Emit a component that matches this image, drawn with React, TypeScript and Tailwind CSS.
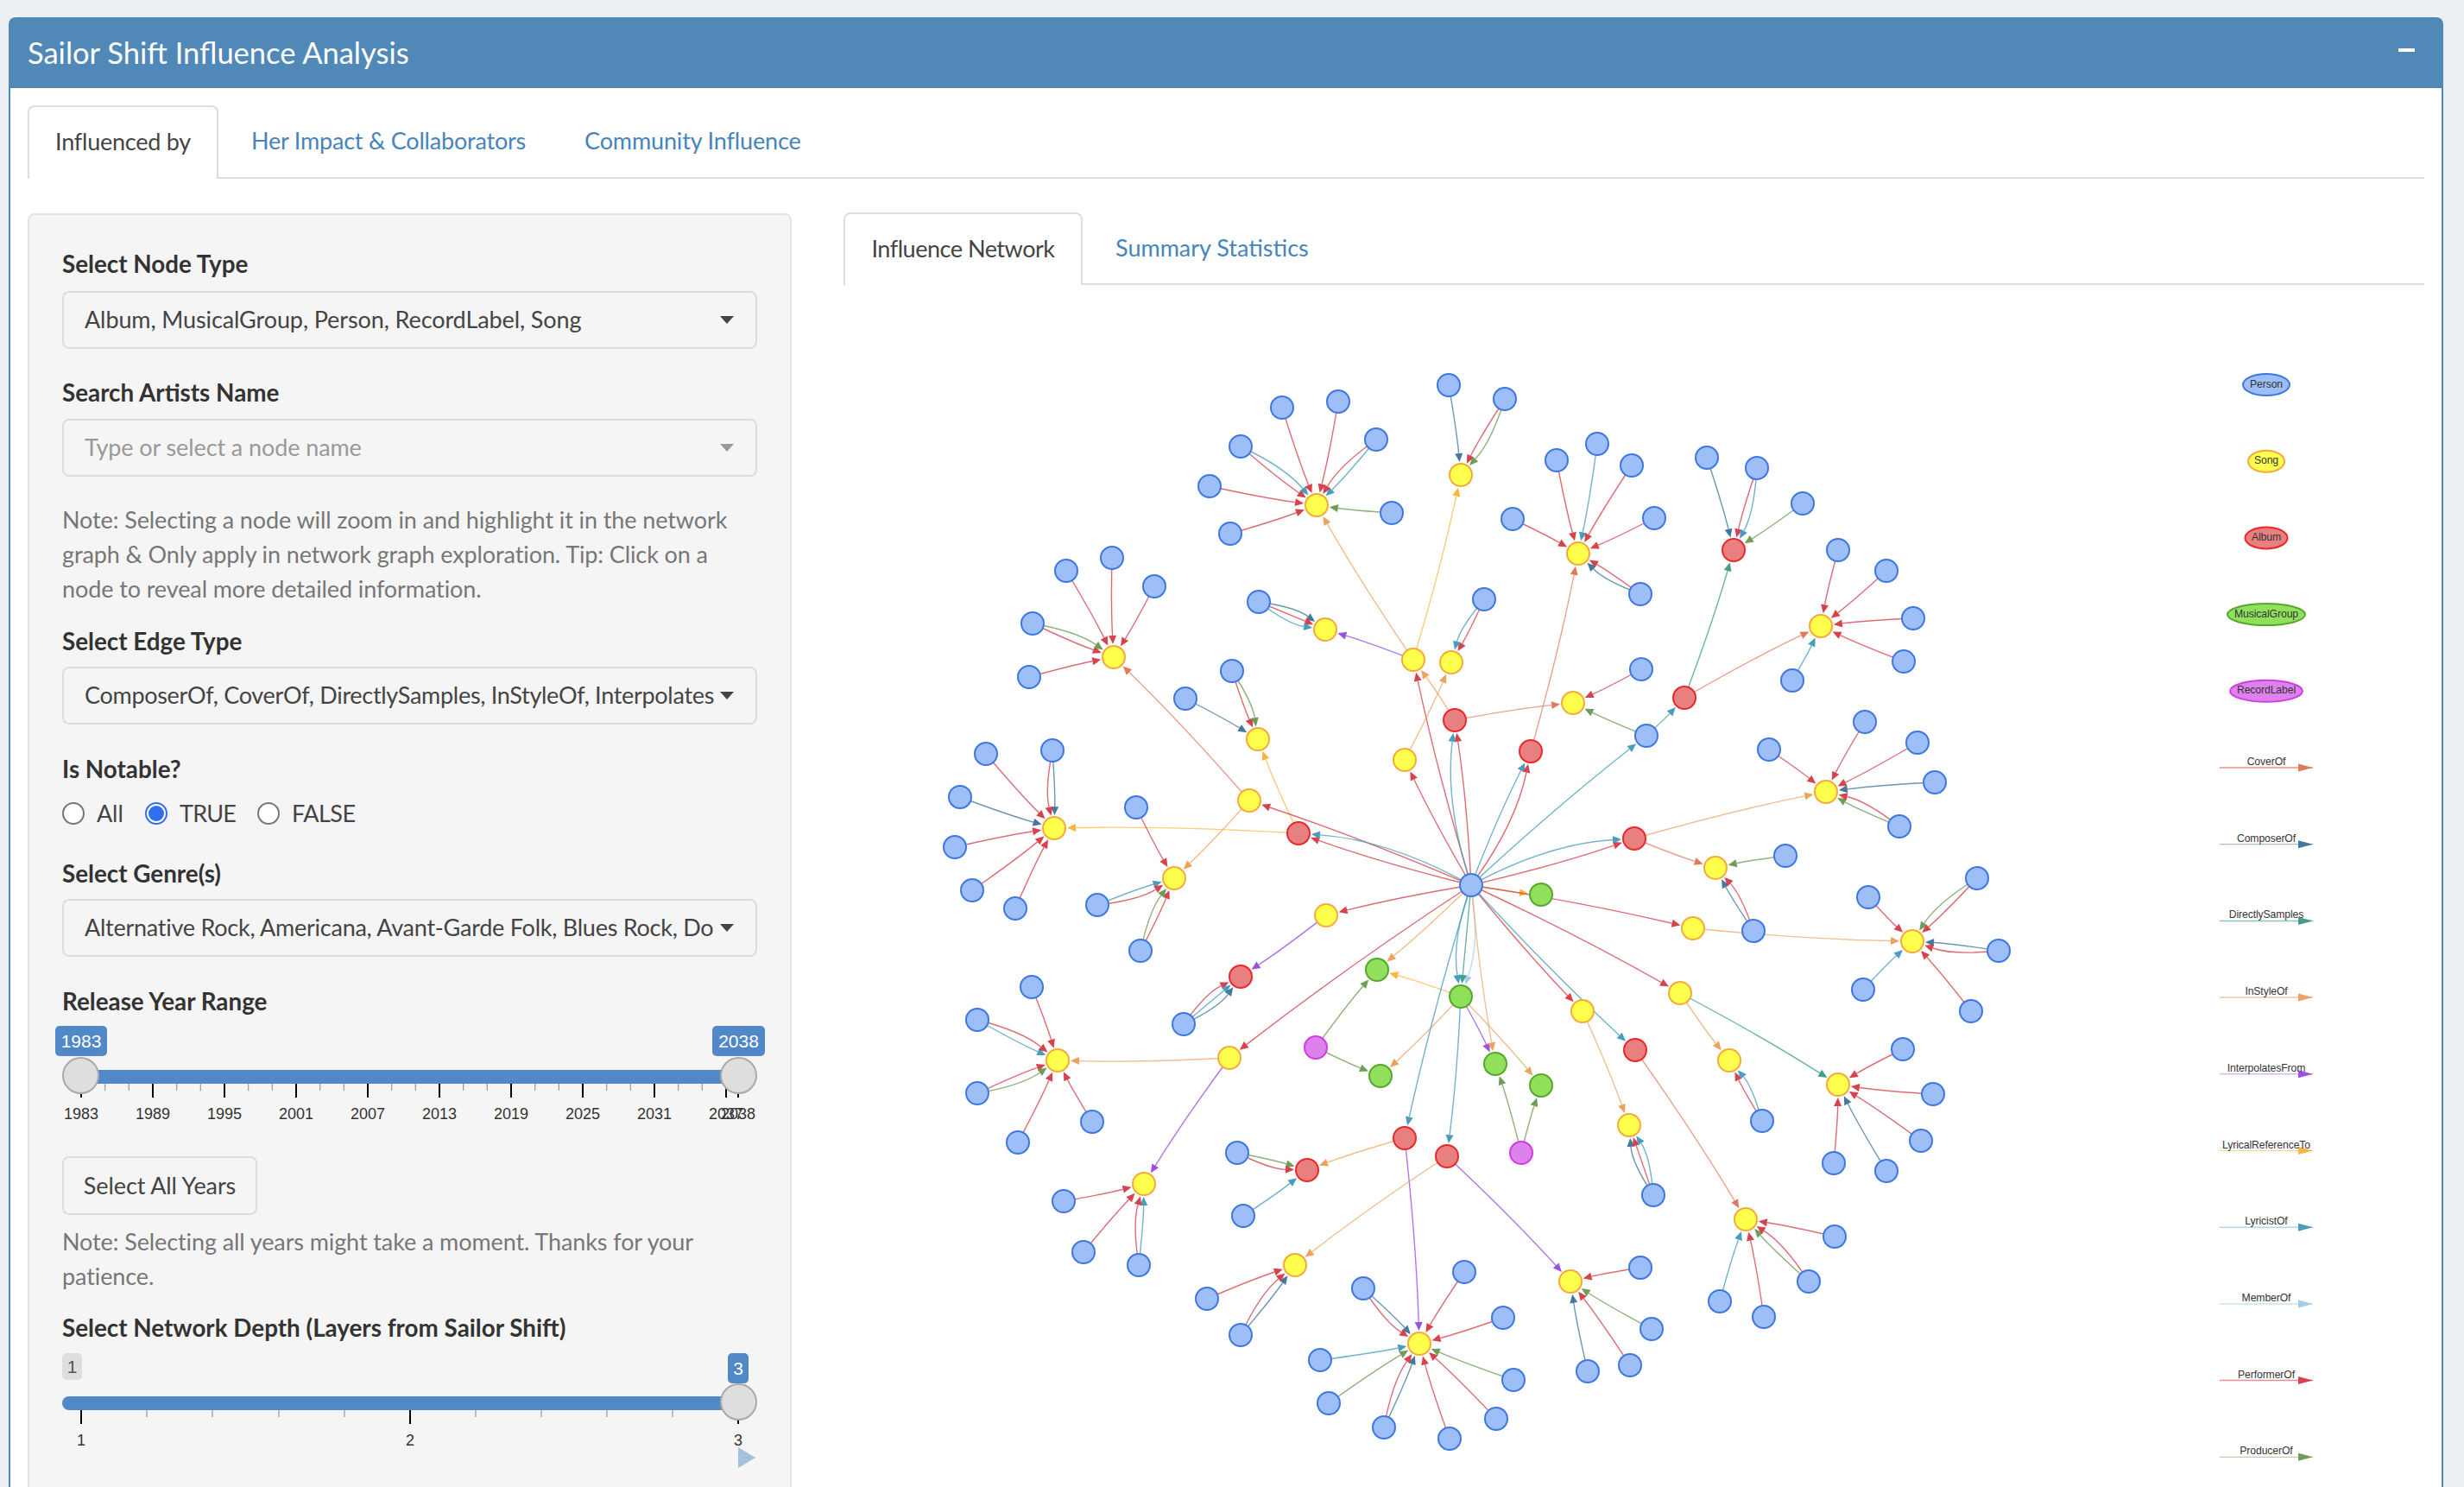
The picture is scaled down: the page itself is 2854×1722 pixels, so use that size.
const NODE_STYLE: Record<string, [string, string]> = {
  b: ["#9dbef6", "#3f77e0"],
  y: ["#ffff4d", "#f6a93b"],
  r: ["#e98080", "#e8282a"],
  g: ["#90e05c", "#57a62f"],
  p: ["#dc82ec", "#d43ae6"],
};

const EDGE_COLOR: Record<string, string> = {
  V: "#df7a5e",
  C: "#44789c",
  D: "#459d90",
  S: "#eba25f",
  I: "#9a50e0",
  Y: "#fbb53c",
  L: "#4a9dbd",
  M: "#a2cde9",
  P: "#d5434d",
  R: "#6f9c57",
};

// hubs and inner nodes: [id, x, y, kind]
const N: [string, number, number, string][] = [
  ["c", 1704, 1024, "b"],
  ["A", 1525, 584, "y"], ["T", 1692, 549, "y"], ["D", 1828, 640, "y"], ["E", 2008, 636, "r"],
  ["F", 2109, 724, "y"], ["B", 1290, 760, "y"], ["Y1", 1535, 728, "y"], ["Y2", 1637, 763, "y"],
  ["Y3", 1681, 766, "y"], ["Rd", 1685, 833, "r"], ["Yc", 1627, 879, "y"], ["Y4", 1457, 855, "y"],
  ["Y5", 1447, 926, "y"], ["R1", 1504, 964, "r"], ["H1", 1221, 958, "y"], ["Y6", 1360, 1016, "y"],
  ["Rn", 1773, 869, "r"], ["Bq", 1907, 851, "b"], ["Re", 1951, 807, "r"], ["Yq", 1822, 813, "y"],
  ["Rf", 1893, 970, "r"], ["G", 2115, 916, "y"], ["Yg", 1987, 1004, "y"], ["Bg", 2031, 1077, "b"],
  ["Gn", 1785, 1035, "g"], ["Yh", 1961, 1074, "y"], ["H", 2215, 1089, "y"], ["Yi", 1946, 1149, "y"],
  ["Yj", 2003, 1227, "y"], ["I", 2129, 1255, "y"], ["Yk", 1833, 1170, "y"], ["Yl", 1887, 1302, "y"],
  ["Rj", 1894, 1215, "r"], ["J", 2022, 1411, "y"], ["Ym", 1536, 1059, "y"], ["Rm", 1437, 1130, "r"],
  ["Yn", 1424, 1224, "y"], ["L", 1225, 1227, "y"], ["Yo", 1325, 1370, "y"], ["G1", 1595, 1122, "g"],
  ["G2", 1692, 1153, "g"], ["G3", 1599, 1245, "g"], ["G4", 1732, 1231, "g"], ["G5", 1785, 1256, "g"],
  ["P1", 1524, 1212, "p"], ["P2", 1762, 1334, "p"], ["R3", 1627, 1317, "r"], ["R4", 1676, 1338, "r"],
  ["R5", 1514, 1354, "r"], ["Yp", 1500, 1464, "y"], ["M", 1644, 1555, "y"], ["K", 1819, 1483, "y"],
];

// leaves: [x, y, target, edge colours]
const LEAF: [number, number, string, string][] = [
  [1485, 471, "A", "P"], [1550, 464, "A", "P"], [1437, 516, "A", "PL"], [1594, 508, "A", "LP"],
  [1401, 562, "A", "P"], [1612, 593, "A", "R"], [1425, 617, "A", "P"],
  [1678, 445, "T", "C"], [1743, 461, "T", "PR"],
  [1752, 600, "D", "P"], [1803, 532, "D", "P"], [1850, 513, "D", "L"], [1890, 538, "D", "P"],
  [1916, 599, "D", "P"], [1900, 687, "D", "PC"],
  [1977, 529, "E", "C"], [2035, 541, "E", "PL"], [2088, 582, "E", "R"],
  [2129, 636, "F", "P"], [2185, 660, "F", "P"], [2216, 715, "F", "P"], [2205, 765, "F", "P"], [2076, 787, "F", "L"],
  [1235, 660, "B", "P"], [1288, 645, "B", "P"], [1337, 678, "B", "P"], [1196, 721, "B", "PR"], [1192, 783, "B", "P"],
  [1458, 696, "Y1", "CPL"], [1719, 693, "Y3", "PL"],
  [1427, 776, "Y4", "PR"], [1373, 808, "Y4", "C"],
  [1142, 872, "H1", "P"], [1219, 868, "H1", "CP"], [1112, 922, "H1", "C"], [1106, 980, "H1", "P"],
  [1126, 1030, "H1", "P"], [1176, 1051, "H1", "P"],
  [1316, 934, "Y6", "P"], [1271, 1047, "Y6", "LP"], [1321, 1100, "Y6", "PR"],
  [1901, 774, "Yq", "P"], [2068, 990, "Yg", "R"],
  [2049, 867, "G", "P"], [2160, 835, "G", "P"], [2221, 859, "G", "P"], [2241, 905, "G", "C"], [2200, 956, "G", "RP"],
  [2164, 1038, "H", "P"], [2290, 1016, "H", "PR"], [2315, 1100, "H", "CP"], [2158, 1145, "H", "L"], [2283, 1170, "H", "P"],
  [2041, 1297, "Yj", "PL"],
  [2204, 1214, "I", "P"], [2239, 1266, "I", "P"], [2225, 1320, "I", "P"], [2185, 1355, "I", "C"], [2124, 1346, "I", "P"],
  [1915, 1383, "Yl", "CPL"],
  [2125, 1431, "J", "P"], [2095, 1483, "J", "RP"], [2043, 1524, "J", "P"], [1992, 1506, "J", "L"],
  [1371, 1185, "Rm", "PLC"],
  [1195, 1142, "L", "P"], [1132, 1180, "L", "LP"], [1132, 1265, "L", "PR"], [1179, 1322, "L", "P"], [1265, 1298, "L", "P"],
  [1232, 1390, "Yo", "P"], [1255, 1449, "Yo", "P"], [1319, 1464, "Yo", "LP"],
  [1433, 1334, "R5", "RP"], [1440, 1407, "R5", "L"],
  [1398, 1503, "Yp", "P"], [1437, 1545, "Yp", "CP"],
  [1579, 1491, "M", "CP"], [1696, 1472, "M", "P"], [1741, 1525, "M", "P"], [1529, 1574, "M", "L"],
  [1539, 1624, "M", "R"], [1603, 1652, "M", "CP"], [1679, 1665, "M", "P"], [1733, 1642, "M", "P"], [1753, 1597, "M", "R"],
  [1900, 1467, "K", "P"], [1913, 1538, "K", "R"], [1888, 1580, "K", "P"], [1839, 1587, "K", "C"],
];

// inner edges: from, to, colours
const INNER: [string, string, string][] = [
  ["Y2", "Y1", "I"], ["Y2", "A", "S"], ["Y2", "T", "Y"], ["c", "Y2", "P"], ["Yc", "Y3", "S"], ["c", "Yc", "P"],
  ["Rd", "Y2", "S"], ["Rd", "Yq", "V"], ["c", "Rd", "PL"], ["R1", "Y4", "Y"], ["Y5", "B", "V"], ["Y5", "Y6", "S"],
  ["c", "Y5", "P"], ["c", "R1", "PL"], ["R1", "H1", "Y"], ["c", "Rn", "LP"], ["Rn", "D", "V"], ["c", "Bq", "L"],
  ["Bq", "Re", "L"], ["Bq", "Yq", "R"], ["Re", "E", "D"], ["Re", "F", "V"], ["c", "Rf", "PL"], ["Rf", "G", "S"],
  ["Rf", "Yg", "V"], ["Bg", "Yg", "CP"], ["c", "Gn", "Y"], ["c", "Yh", "P"], ["Yh", "H", "S"], ["c", "Yi", "P"],
  ["Yi", "Yj", "S"], ["Yi", "I", "D"], ["c", "Yk", "P"], ["Yk", "Yl", "S"], ["c", "Rj", "L"], ["Rj", "J", "V"],
  ["c", "Ym", "P"], ["Ym", "Rm", "I"], ["c", "Yn", "P"], ["Yn", "L", "S"], ["Yn", "Yo", "I"], ["c", "G1", "S"],
  ["G2", "G1", "Y"], ["P1", "G1", "R"], ["P1", "G3", "R"], ["G2", "G3", "S"], ["c", "G2", "MDL"], ["G2", "G4", "I"],
  ["c", "G4", "S"], ["G2", "G5", "S"], ["P2", "G4", "R"], ["P2", "G5", "R"], ["c", "R3", "L"], ["G2", "R4", "L"],
  ["R3", "R5", "S"], ["R3", "M", "I"], ["R4", "Yp", "S"], ["R4", "K", "I"],
];

const POS: Record<string, [number, number]> = {};
N.forEach(([id, x, y]) => {
  POS[id] = [x, y];
});

function curveOffsets(n: number, seed: number) {
  const s = seed % 2 === 0 ? 1 : -1;
  if (n === 1) return [s * 0.02];
  if (n === 2) return [s * 0.025, -s * 0.11];
  return [-0.13, 0, 0.13];
}

const PALE = "VSYM";

function Edge({ x1, y1, x2, y2, code, off }: { x1: number; y1: number; x2: number; y2: number; code: string; off: number }) {
  const dx = x2 - x1;
  const dy = y2 - y1;
  const cx = (x1 + x2) / 2 - dy * off;
  const cy = (y1 + y2) / 2 + dx * off;
  const ex = x2 - cx;
  const ey = y2 - cy;
  const el = Math.hypot(ex, ey);
  const ux = ex / el;
  const uy = ey / el;
  const tx = x2 - ux * 15;
  const ty = y2 - uy * 15;
  const bx = tx - ux * 10;
  const by = ty - uy * 10;
  const color = EDGE_COLOR[code];
  return (
    <g>
      <path d={`M${x1} ${y1}Q${cx} ${cy} ${bx} ${by}`} fill="none" stroke={color} strokeWidth={1.4} strokeOpacity={PALE.includes(code) ? 0.7 : 0.78} />
      <polygon points={`${tx},${ty} ${bx - uy * 4.5},${by + ux * 4.5} ${bx + uy * 4.5},${by - ux * 4.5}`} fill={color} />
    </g>
  );
}

function Network() {
  const edges: { x1: number; y1: number; x2: number; y2: number; code: string; off: number }[] = [];
  INNER.forEach(([a, b, codes], i) => {
    const [x1, y1] = POS[a];
    const [x2, y2] = POS[b];
    const offs = curveOffsets(codes.length, i);
    codes.split("").forEach((code, j) => edges.push({ x1, y1, x2, y2, code, off: offs[j] }));
  });
  LEAF.forEach(([x1, y1, t, codes], i) => {
    const [x2, y2] = POS[t];
    const offs = curveOffsets(codes.length, i);
    codes.split("").forEach((code, j) => edges.push({ x1, y1, x2, y2, code, off: offs[j] }));
  });
  return (
    <>
      {edges.map((e, i) => (
        <Edge key={i} {...e} />
      ))}
      {LEAF.map(([x, y], i) => (
        <circle key={i} cx={x} cy={y} r={13} fill={NODE_STYLE.b[0]} stroke={NODE_STYLE.b[1]} strokeWidth={2} />
      ))}
      {N.map(([id, x, y, k]) => (
        <circle key={id} cx={x} cy={y} r={13} fill={NODE_STYLE[k][0]} stroke={NODE_STYLE[k][1]} strokeWidth={2} />
      ))}
    </>
  );
}

const LEGEND_NODES: [string, string, number][] = [
  ["Person", "b", 27],
  ["Song", "y", 21],
  ["Album", "r", 24.5],
  ["MusicalGroup", "g", 45],
  ["RecordLabel", "p", 42],
];

const LEGEND_EDGES: [string, string, number][] = [
  ["CoverOf", "V", 2],
  ["ComposerOf", "C", 1],
  ["DirectlySamples", "D", 1.5],
  ["InStyleOf", "S", 1.5],
  ["InterpolatesFrom", "I", 1],
  ["LyricalReferenceTo", "Y", 1],
  ["LyricistOf", "L", 1],
  ["MemberOf", "M", 1.5],
  ["PerformerOf", "P", 1.5],
  ["ProducerOf", "R", 1],
];

function Legend() {
  return (
    <g fontFamily="'Liberation Sans', Arial, sans-serif" fontSize={12.2} fill="#343434" textAnchor="middle">
      {LEGEND_NODES.map(([label, k, rx], i) => {
        const y = 444.5 + 88.7 * i;
        return (
          <g key={label}>
            <ellipse cx={2625} cy={y} rx={rx} ry={12.5} fill={NODE_STYLE[k][0]} stroke={NODE_STYLE[k][1]} strokeWidth={2} />
            <text x={2625} y={y + 3}>{label}</text>
          </g>
        );
      })}
      {LEGEND_EDGES.map(([label, code, w], i) => {
        const y = 888 + 88.7 * i;
        return (
          <g key={label}>
            <line x1={2571} y1={y} x2={2679} y2={y} stroke={EDGE_COLOR[code]} strokeWidth={w} strokeOpacity={0.6} />
            <polygon points={`2679,${y} 2662,${y - 4.5} 2662,${y + 4.5}`} fill={EDGE_COLOR[code]} />
            <text x={2625} y={y - 3}>{label}</text>
          </g>
        );
      })}
    </g>
  );
}

function Caret({ muted }: { muted?: boolean }) {
  return <span className={`w-0 h-0 shrink-0 border-x-[8px] border-x-transparent border-t-[9px] ${muted ? "border-t-[#999]" : "border-t-[#444]"}`} />;
}

function Label({ children }: { children: React.ReactNode }) {
  return <div className="font-bold text-[#333] text-[27.8px] tracking-normal leading-[40px]">{children}</div>;
}

function Select({ text, muted, className }: { text: string; muted?: boolean; className?: string }) {
  return (
    <div className={`flex items-center justify-between h-[67px] pl-[24px] pr-[25px] border-2 border-[#ddd] rounded-lg ${muted ? "text-[#999]" : "text-[#444]"} ${className ?? ""}`}>
      <span className="whitespace-nowrap">{text}</span>
      <Caret muted={muted} />
    </div>
  );
}

function Radio({ label, checked, labelClass }: { label: string; checked?: boolean; labelClass: string }) {
  return (
    <div className="flex items-center gap-[14px]">
      <span className={`w-[26px] h-[26px] rounded-full flex items-center justify-center bg-white border-2 ${checked ? "border-[#2f6fed]" : "border-[#777]"}`}>
        {checked && <span className="w-[18px] h-[18px] rounded-full bg-[#2f6fed]" />}
      </span>
      <span className={`text-[#444] whitespace-nowrap ${labelClass}`}>{label}</span>
    </div>
  );
}

function Handle() {
  return <span className="w-[43px] h-[43px] rounded-full bg-[#dedede] border-2 border-[#aaa] shrink-0" />;
}

function Badge({ children, grey, className }: { children: React.ReactNode; grey?: boolean; className?: string }) {
  return (
    <span className={`absolute rounded-[5px] text-[21px] leading-none tracking-normal flex items-center justify-center font-['Liberation_Sans'] ${grey ? "bg-[#dedede] text-[#555]" : "bg-[#5088c8] text-white"} ${className ?? ""}`}>
      {children}
    </span>
  );
}

function YearSlider() {
  const years = ["1983", "1989", "1995", "2001", "2007", "2013", "2019", "2025", "2031", "2037"];
  return (
    <div className="relative h-[122px] font-['Liberation_Sans'] tracking-normal">
      <Badge className="left-[-8px] top-0 w-[60px] h-[35px]">1983</Badge>
      <Badge className="right-[-9px] top-0 w-[61px] h-[35px]">2038</Badge>
      <svg className="absolute left-0 top-0" width={806} height={122} viewBox="72 1188 806 122">
        {Array.from({ length: 28 }, (_, i) => 94 + (83 * i) / 3).filter((x) => x < 840).map((x) => (
          <line key={x} x1={x} x2={x} y1={1255} y2={1263} stroke="#999" strokeWidth={1.2} />
        ))}
        {years.map((y, i) => (
          <g key={y}>
            <line x1={94 + 83 * i} x2={94 + 83 * i} y1={1255} y2={1271} stroke="#000" strokeWidth={2} />
            <text x={94 + 83 * i} y={1296} textAnchor="middle" fontSize={18} fill="#333">{y}</text>
          </g>
        ))}
        <line x1={855} x2={855} y1={1255} y2={1271} stroke="#000" strokeWidth={2} />
        <text x={855} y={1296} textAnchor="middle" fontSize={18} fill="#333">2038</text>
      </svg>
      <div className="absolute left-[16px] right-[16px] top-[51px] h-[16px] bg-[#5088c8]" />
      <div className="absolute left-0 right-0 top-[36px] flex justify-between">
        <Handle />
        <Handle />
      </div>
    </div>
  );
}

function DepthSlider() {
  return (
    <div className="relative h-[140px] font-['Liberation_Sans'] tracking-normal">
      <Badge grey className="left-0 top-[3px] w-[23px] h-[31px]">1</Badge>
      <Badge className="left-[771px] top-[3px] w-[24px] h-[35px]">3</Badge>
      <svg className="absolute left-0 top-0" width={806} height={140} viewBox="72 1564 806 140">
        {[170, 246, 323, 399, 551, 627, 703, 779].map((x) => (
          <line key={x} x1={x} x2={x} y1={1633} y2={1641} stroke="#999" strokeWidth={1.2} />
        ))}
        {([[94, "1"], [475, "2"], [855, "3"]] as [number, string][]).map(([x, t]) => (
          <g key={t}>
            <line x1={x} x2={x} y1={1633} y2={1649} stroke="#000" strokeWidth={2} />
            <text x={x} y={1674} textAnchor="middle" fontSize={18} fill="#333">{t}</text>
          </g>
        ))}
        <polygon points="855,1676 875,1688 855,1700" fill="#a3c0dc" />
      </svg>
      <div className="absolute left-0 right-[16px] top-[53px] h-[16px] bg-[#5088c8] rounded-l-[8px]" />
      <div className="absolute right-0 top-[38px] flex">
        <Handle />
      </div>
    </div>
  );
}

export default function App() {
  return (
    <div className="w-[2854px] h-[1722px] overflow-hidden bg-[#ecf0f5] pl-[10px] pr-[24px] pt-[20px] font-['Lato','Liberation_Sans',sans-serif] text-[27px] tracking-[-0.1px]">
      <div className="h-[82px] bg-[#5089b8] rounded-t-[8px] flex items-center justify-between pl-[22px] pr-[33px] text-white">
        <span className="text-[34.5px] tracking-normal">Sailor Shift Influence Analysis</span>
        <span className="w-[19px] h-[4px] bg-white mb-[6px]" />
      </div>
      <div className="border-x-2 border-[#5089b8] bg-white px-[20px] pt-[20px] h-[1620px]">
        <div className="flex h-[85px] border-b-2 border-[#ddd]">
          <div className="w-[221px] h-[85px] pb-[2px] border-2 border-b-0 border-[#ddd] rounded-t-lg bg-white flex items-center justify-center text-[#444] tracking-[-0.25px]">Influenced by</div>
          <div className="ml-[38px] flex items-center text-[#4684bb] tracking-[-0.2px]">Her Impact &amp; Collaborators</div>
          <div className="ml-[68px] flex items-center text-[#4684bb] tracking-[-0.14px]">Community Influence</div>
        </div>
        <div className="flex gap-[60px] mt-[40px]">
          <div className="w-[885px] shrink-0 h-[1500px] bg-[#f5f5f5] border-2 border-[#e3e3e3] rounded-lg px-[38px] pt-[37px] text-[#444]">
            <Label>Select Node Type</Label>
            <Select text="Album, MusicalGroup, Person, RecordLabel, Song" className="mt-[11px]" />
            <div className="mt-[31px]"><Label>Search Artists Name</Label></div>
            <Select text="Type or select a node name" muted className="mt-[10px]" />
            <div className="mt-[30px] leading-[40px] text-[#777]">Note: Selecting a node will zoom in and highlight it in the network graph &amp; Only apply in network graph exploration. Tip: Click on a node to reveal more detailed information.</div>
            <div className="mt-[21px]"><Label>Select Edge Type</Label></div>
            <Select text="ComposerOf, CoverOf, DirectlySamples, InStyleOf, Interpolates" className="mt-[9px] tracking-[-0.3px]" />
            <div className="mt-[32px]"><Label>Is Notable?</Label></div>
            <div className="mt-[11px] flex gap-[28px] leading-[40px]">
              <Radio label="All" labelClass="w-[28px]" />
              <Radio label="TRUE" checked labelClass="w-[62px] tracking-[-0.8px]" />
              <Radio label="FALSE" labelClass="w-[69px] tracking-[-0.5px]" />
            </div>
            <div className="mt-[30px]"><Label>Select Genre(s)</Label></div>
            <Select text="Alternative Rock, Americana, Avant-Garde Folk, Blues Rock, Do" className="mt-[9px] tracking-[-0.25px]" />
            <div className="mt-[32px]"><Label>Release Year Range</Label></div>
            <div className="mt-[8px]"><YearSlider /></div>
            <button className="mt-[29px] block h-[68px] w-[226px] border-2 border-[#ddd] rounded-lg text-[#444] text-center">Select All Years</button>
            <div className="mt-[11px] leading-[40px] text-[#777]">Note: Selecting all years might take a moment. Thanks for your patience.</div>
            <div className="mt-[20px]"><Label>Select Network Depth (Layers from Sailor Shift)</Label></div>
            <div className="mt-[6px]"><DepthSlider /></div>
          </div>
          <div className="flex-1 min-w-0 -mt-[1px]">
            <div className="flex h-[84px] border-b-2 border-[#ddd]">
              <div className="w-[277px] h-[84px] pb-[2px] border-2 border-b-0 border-[#ddd] rounded-t-lg bg-white flex items-center justify-center text-[#444] tracking-[-0.47px]">Influence Network</div>
              <div className="ml-[38px] flex items-center text-[#4684bb] tracking-normal">Summary Statistics</div>
            </div>
            <svg className="block" width={1831} height={1393} viewBox="977 329 1831 1393">
              <Network />
              <Legend />
            </svg>
          </div>
        </div>
      </div>
    </div>
  );
}
